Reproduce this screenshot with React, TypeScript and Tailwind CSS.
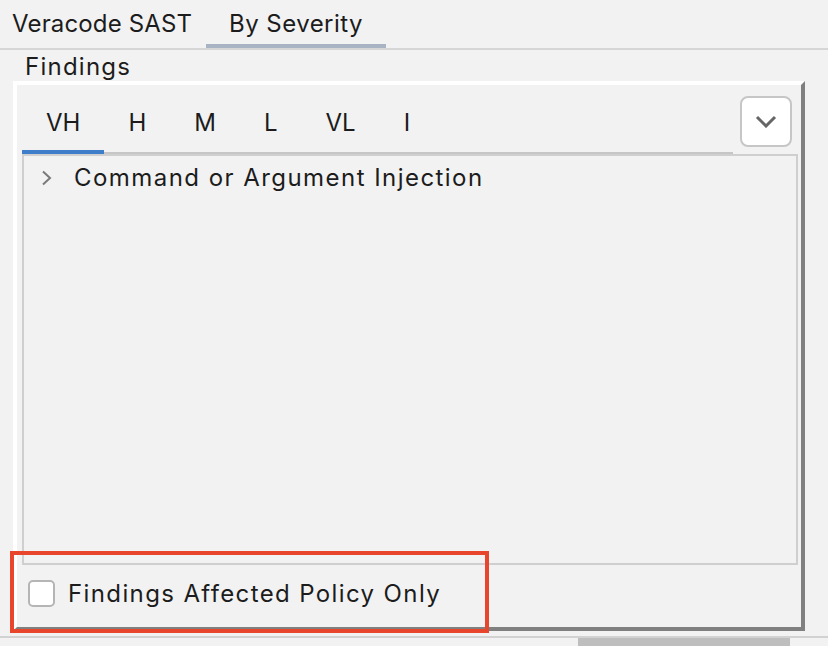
import React from "react";

const severityTabs = ["VH", "H", "M", "L", "VL", "I"];

const font = { fontFamily: "Inter, 'Noto Sans', sans-serif" };

export default function App() {
  return (
    <div
      className="relative w-[828px] h-[646px] overflow-hidden bg-[#f2f2f2] text-[#1c1c1c] text-[24px] leading-none"
      style={font}
    >
      {/* top tool window tabs */}
      <div className="flex h-[50px] border-b-2 border-[#d6d6d6]">
        <div className="w-[206px] pl-[12px] pt-[12px] tracking-[0.15px]">Veracode SAST</div>
        <div className="w-[180px] flex flex-col">
          <div className="flex-1 pt-[12px] text-center tracking-[0.45px]">By Severity</div>
          <div className="h-[4px] bg-[#a8b4c4]" />
        </div>
      </div>

      <div className="pl-[25px] pt-[5px] h-[31px] tracking-[1.25px]">Findings</div>

      {/* findings panel */}
      <div className="ml-[13px] w-[792px] h-[550px] flex flex-col border-[4px] border-t-white border-l-white border-r-[#808080] border-b-[#808080]">
        <div className="flex items-start pl-[5px] pr-[9px]">
          <div className="flex h-[69px] w-[711px] border-b-2 border-[#c6c6c6]">
            {severityTabs.map((tab, i) => (
              <div
                key={tab}
                className={
                  i === 0
                    ? "px-[24px] pt-[26px] border-b-[4px] border-[#3d7dca] mb-[-2px]"
                    : "px-[24px] pt-[26px]"
                }
              >
                {tab}
              </div>
            ))}
          </div>
          <div className="flex-1" />
          <button className="mt-[11px] w-[52px] h-[51px] rounded-[8px] border-2 border-[#c6c6c6] bg-white flex items-center justify-center">
            <svg width="22" height="13" viewBox="0 0 22 13" fill="none">
              <path d="M2 2l9 9 9-9" stroke="#666" strokeWidth="3" />
            </svg>
          </button>
        </div>

        <div className="ml-[5px] mr-[3px] h-[411px] border-2 border-[#cfcfcf]">
          <div className="flex items-center h-[44px] pl-[17px]">
            <svg width="12" height="16" viewBox="0 0 12 16" fill="none">
              <path d="M2 1.5l7 6.5-7 6.5" stroke="#7a7a7a" strokeWidth="2" />
            </svg>
            <span className="ml-[21px] tracking-[1.45px]">Command or Argument Injection</span>
          </div>
        </div>

        <div className="flex items-center pl-[11px] pt-[15px]">
          <div className="w-[27px] h-[27px] rounded-[5px] border-2 border-[#b5b5b5] bg-white" />
          <span className="ml-[13px] tracking-[1.38px]">Findings Affected Policy Only</span>
        </div>
      </div>

      {/* bottom separator and scrollbar */}
      <div className="mt-[5px] h-[2px] bg-[#d2d2d2]" />
      <div className="h-[8px] flex">
        <div className="w-[578px]" />
        <div className="w-[212px] bg-[#bebebe]" />
      </div>

      {/* highlight annotation */}
      <div className="absolute left-[10px] top-[551px] w-[479px] h-[82px] border-[4px] border-[#e8452d]" />
    </div>
  );
}
